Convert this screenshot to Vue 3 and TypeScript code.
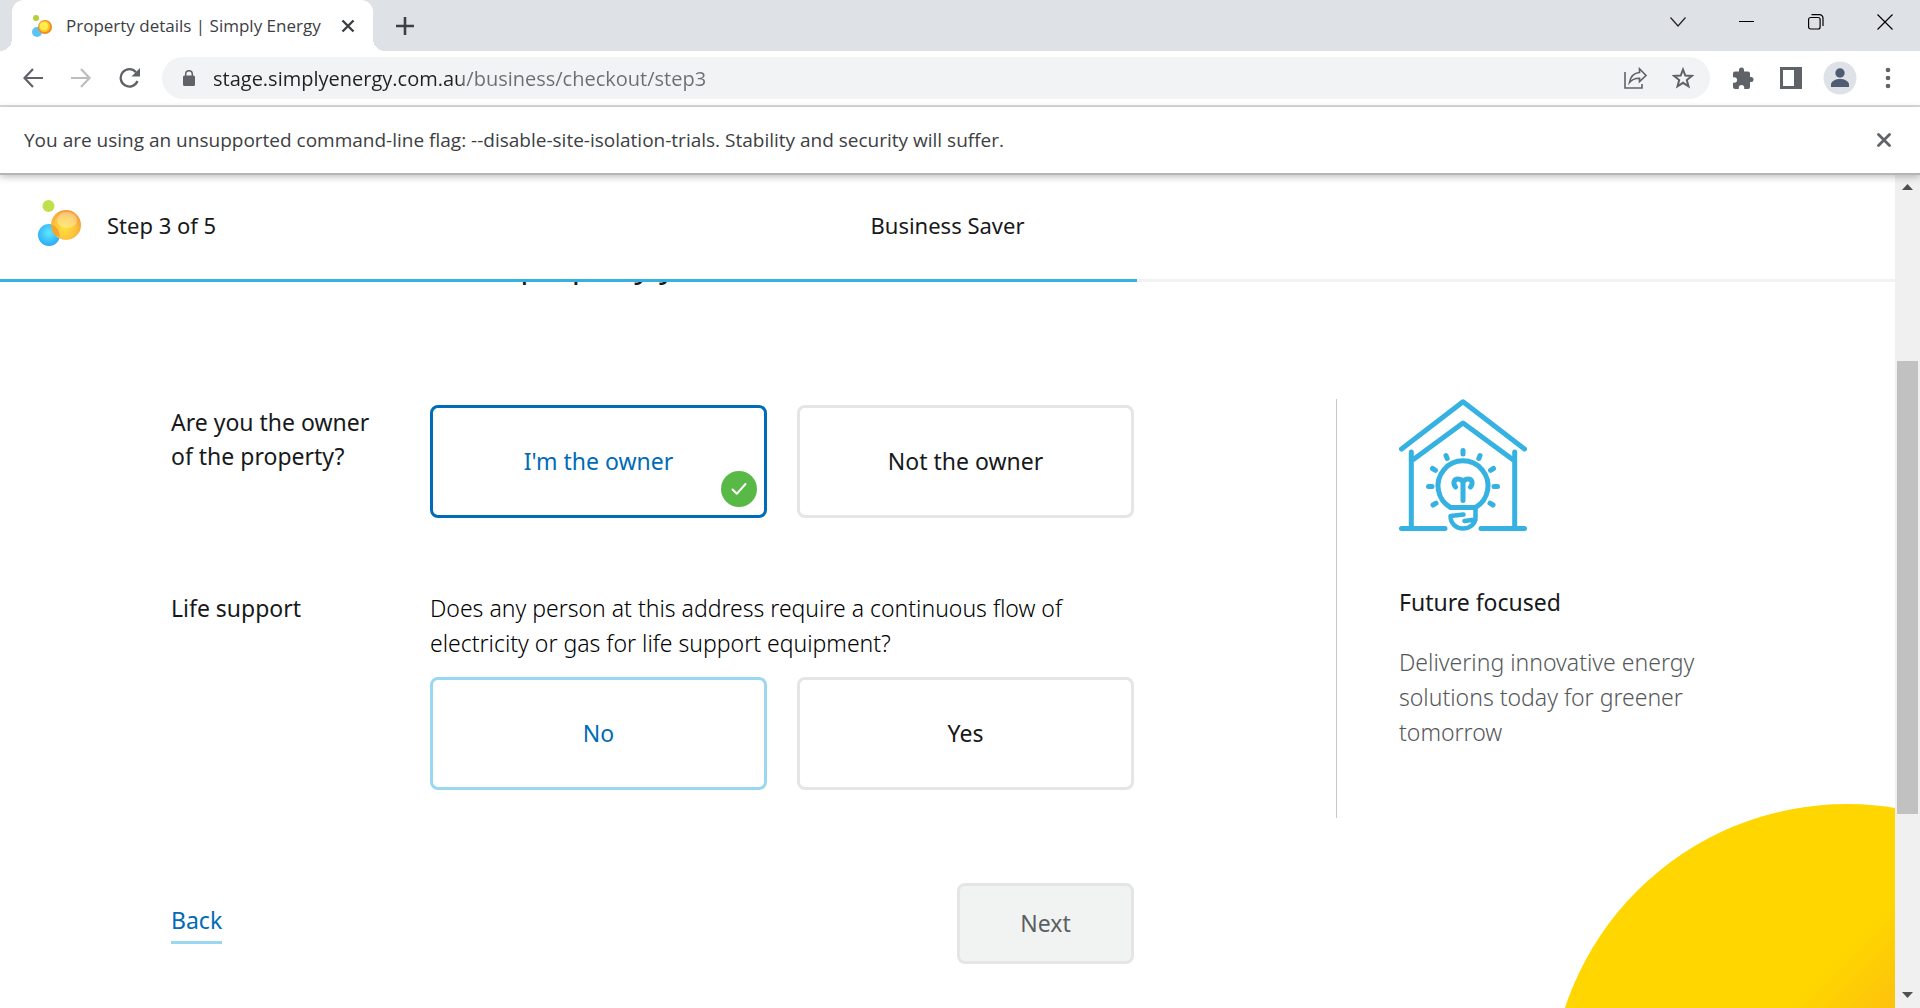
<script setup lang="ts">
import { computed, ref } from 'vue'

interface Choice {
  value: string
  label: string
}

const address = ref('stage.simplyenergy.com.au/business/checkout/step3')

const step = 3
const totalSteps = 5
const progress = computed(() => `${(step / totalSteps) * 100}%`)

const ownerChoices: Choice[] = [
  { value: 'owner', label: "I'm the owner" },
  { value: 'not-owner', label: 'Not the owner' },
]
const lifeSupportChoices: Choice[] = [
  { value: 'no', label: 'No' },
  { value: 'yes', label: 'Yes' },
]

const owner = ref('owner')
const lifeSupport = ref('')
const highlighted = ref('no')
</script>

<template>
  <div class="browser">
    <div class="tab-strip">
      <div class="tab">
        <svg class="favicon" viewBox="0 0 22 24" aria-hidden="true">
          <circle cx="6" cy="18" r="5" fill="#5cc3f3" />
          <circle cx="14" cy="13" r="7" fill="#f28a1f" />
          <circle cx="13.500" cy="12.500" r="5.500" fill="#fdc928" />
          <circle cx="13" cy="12" r="4" fill="#ffee4e" />
          <circle cx="5" cy="4" r="3" fill="#b4cf3a" />
        </svg>
        <span class="tab-title">Property details | Simply Energy</span>
        <button class="icon-button" type="button" aria-label="Close tab">
          <svg width="14" height="14" viewBox="0 0 14 14"><path d="M1.500 1.500l11 11M12.500 1.500l-11 11" stroke="#3c4043" stroke-width="2.400" fill="none" /></svg>
        </button>
      </div>
      <button class="icon-button new-tab" type="button" aria-label="New tab">
        <svg width="18" height="18" viewBox="0 0 18 18"><path d="M9 0v18M0 9h18" stroke="#3c4043" stroke-width="2.600" /></svg>
      </button>
      <div class="window-controls">
        <button class="icon-button" type="button" aria-label="Search tabs">
          <svg width="16" height="16" viewBox="0 0 16 16"><path d="M.5 3.500L8 12l7.500-8.500" stroke="#222" stroke-width="1.200" fill="none" /></svg>
        </button>
        <button class="icon-button" type="button" aria-label="Minimise">
          <svg width="16" height="16" viewBox="0 0 16 16"><path d="M0 7.500h15" stroke="#000" /></svg>
        </button>
        <button class="icon-button" type="button" aria-label="Restore">
          <svg width="16" height="16" viewBox="0 0 16 16"><g fill="none" stroke="#000" stroke-width="1.200"><rect x=".6" y="3.500" width="11.500" height="11.500" rx="2" /><path d="M3.500.6h8a3.500 3.500 0 0 1 3.500 3.500v8" /></g></svg>
        </button>
        <button class="icon-button" type="button" aria-label="Close window">
          <svg width="16" height="16" viewBox="0 0 16 16"><path d="M.5.5l15 15M15.500.5l-15 15" stroke="#000" stroke-width="1.200" /></svg>
        </button>
      </div>
    </div>

    <div class="toolbar">
      <div class="nav-buttons">
        <button class="icon-button" type="button" aria-label="Go back">
          <svg width="20" height="20" viewBox="0 0 20 20"><path d="M20 10H2M10 1L1.500 10l8.500 9" stroke="#5f6368" stroke-width="2.200" fill="none" /></svg>
        </button>
        <button class="icon-button" type="button" aria-label="Go forward">
          <svg width="20" height="20" viewBox="0 0 20 20"><path d="M0 10h18M10 1l8.500 9-8.500 9" stroke="#bbbdbf" stroke-width="2.200" fill="none" /></svg>
        </button>
        <button class="icon-button" type="button" aria-label="Reload">
          <svg width="22" height="20" viewBox="0 0 22 20"><path d="M18.500 13A8.700 8.700 0 1 1 17 4.200" stroke="#5f6368" stroke-width="2.300" fill="none" /><path d="M21 0v8.500h-8.500z" fill="#5f6368" /></svg>
        </button>
      </div>
      <div class="address-bar">
        <svg width="12" height="16" viewBox="0 0 12 16" aria-hidden="true"><rect y="5.500" width="12" height="10.500" rx="1.500" fill="#5f6368" /><path d="M2.700 6V4a3.300 3.300 0 0 1 6.600 0v2" stroke="#5f6368" stroke-width="1.500" fill="none" /></svg>
        <input v-model="address" class="address" type="text" aria-label="Address" />
        <button class="icon-button" type="button" aria-label="Share this page">
          <svg width="24" height="22" viewBox="0 0 24 22"><g fill="none" stroke="#5f6368" stroke-width="1.600"><path d="M1 5v16h17v-4" /><path d="M15.500 1.800L22 8.500l-6.500 6.200v-3.500c-5-.2-7.500 1.200-10 4.300 1-6 4-9.500 10-10z" /></g></svg>
        </button>
        <button class="icon-button" type="button" aria-label="Bookmark this page">
          <svg width="22" height="22" viewBox="0 0 22 22"><path d="M11 2.500l2.300 6 6.500.4-5 4.100 1.700 6.300-5.500-3.500-5.500 3.500L7.200 13l-5-4.100 6.500-.4z" fill="none" stroke="#5f6368" stroke-width="2" /></svg>
        </button>
      </div>
      <div class="tools">
        <button class="icon-button" type="button" aria-label="Extensions">
          <svg width="22" height="22" viewBox="0 0 22 22"><path d="M19 10h-1V6.500a2 2 0 0 0-2-2h-4V3a2.500 2.500 0 0 0-5 0v1.500H3a2 2 0 0 0-2 2v3.800h1.300a2.700 2.700 0 0 1 0 5.400H1V20a2 2 0 0 0 2 2h3.800v-1.400a2.700 2.700 0 0 1 5.400 0V22H16a2 2 0 0 0 2-2v-5h1a2.500 2.500 0 0 0 0-5z" fill="#5f6368" /></svg>
        </button>
        <button class="icon-button" type="button" aria-label="Side panel">
          <svg width="22" height="22" viewBox="0 0 22 22"><path fill-rule="evenodd" d="M0 0h22v22H0zM3 3v16h11V3z" fill="#5f6368" /></svg>
        </button>
        <button class="icon-button" type="button" aria-label="Profile">
          <svg width="34" height="34" viewBox="0 0 34 34"><circle cx="17" cy="17" r="16.500" fill="#dee1e6" /><circle cx="17" cy="12" r="4.700" fill="#4f5b73" /><path d="M8 26v-2.500c0-3.500 5-5.500 9-5.500s9 2 9 5.500V26z" fill="#4f5b73" /></svg>
        </button>
        <button class="icon-button" type="button" aria-label="Menu">
          <svg width="6" height="22" viewBox="0 0 6 22"><g fill="#5f6368"><circle cx="3" cy="3" r="2.300" /><circle cx="3" cy="11" r="2.300" /><circle cx="3" cy="19" r="2.300" /></g></svg>
        </button>
      </div>
    </div>

    <div class="infobar">
      <span>You are using an unsupported command-line flag: --disable-site-isolation-trials. Stability and security will suffer.</span>
      <button class="icon-button" type="button" aria-label="Dismiss">
        <svg width="14" height="14" viewBox="0 0 14 14"><path d="M1.500 1.500l11 11M12.500 1.500l-11 11" stroke="#5f6368" stroke-width="2.800" stroke-linecap="round" /></svg>
      </button>
    </div>

    <div class="viewport">
      <div class="page">
        <header class="page-header">
          <div class="header-row">
            <div class="step">
              <svg class="logo" width="44" height="46" viewBox="0 0 44 46" aria-hidden="true">
                <defs>
                  <radialGradient id="sun" cx=".45" cy=".6" r=".6"><stop offset="0" stop-color="#ffe03c" /><stop offset=".6" stop-color="#fdc63c" /><stop offset="1" stop-color="#f59a3c" /></radialGradient>
                  <radialGradient id="drop" cx=".5" cy=".4" r=".6"><stop offset="0" stop-color="#5fe9ff" /><stop offset="1" stop-color="#2ba9f5" /></radialGradient>
                </defs>
                <circle cx="11" cy="35" r="11" fill="url(#drop)" />
                <circle cx="28" cy="25" r="15" fill="url(#sun)" />
                <ellipse cx="29" cy="20" rx="10" ry="8" fill="#fff" opacity=".3" />
                <path d="M17 35a15 15 0 0 1-3.500-10.500A11 11 0 0 1 21.500 37z" fill="#f28a2c" opacity=".6" />
                <circle cx="10.500" cy="6" r="6" fill="#bfe04a" />
              </svg>
              <span>Step {{ step }} of {{ totalSteps }}</span>
            </div>
            <div class="plan">Business Saver</div>
          </div>
          <div class="track"><div class="track-fill" :style="{ width: progress }"></div></div>
        </header>

        <main class="content">
          <div class="scrolled"><h1>About property you own</h1></div>
          <div class="columns">
            <form class="form" @submit.prevent>
              <div class="question" role="radiogroup" aria-labelledby="owner-label">
                <div id="owner-label" class="question-label">Are you the owner of the property?</div>
                <div class="choices">
                  <label
                    v-for="choice in ownerChoices"
                    :key="choice.value"
                    class="choice"
                    :class="{ selected: owner === choice.value }"
                  >
                    <input v-model="owner" type="radio" name="owner" :value="choice.value" />
                    {{ choice.label }}
                    <span v-if="owner === choice.value" class="badge">
                      <svg width="18" height="16" viewBox="0 0 18 16"><path d="M2.500 8.500l4.300 4.300L15.500 3" fill="none" stroke="#fff" stroke-width="2" stroke-linecap="round" stroke-linejoin="round" /></svg>
                    </span>
                  </label>
                </div>
              </div>

              <div class="question" role="radiogroup" aria-labelledby="life-support-label">
                <div id="life-support-label" class="question-label">Life support</div>
                <div class="question-body">
                  <p class="question-text">Does any person at this address require a continuous flow of electricity or gas for life support equipment?</p>
                  <div class="choices">
                    <label
                      v-for="choice in lifeSupportChoices"
                      :key="choice.value"
                      class="choice"
                      :class="{ highlighted: highlighted === choice.value, selected: lifeSupport === choice.value }"
                      @mouseenter="highlighted = choice.value"
                    >
                      <input v-model="lifeSupport" type="radio" name="life-support" :value="choice.value" />
                      {{ choice.label }}
                    </label>
                  </div>
                </div>
              </div>

              <div class="actions">
                <a class="back" href="#step2">Back</a>
                <button class="next" type="submit" :disabled="!lifeSupport">Next</button>
              </div>
            </form>

            <aside class="promo">
              <svg width="128" height="132" viewBox="0 0 128 132" aria-hidden="true">
                <g fill="none" stroke="#35b1e2" stroke-width="5" stroke-linecap="round" stroke-linejoin="round">
                  <path d="M2.500 50L64 2.800 125.500 50" />
                  <path d="M12.300 62L64 24l51.700 38M12.300 53v76M115.700 53v76" />
                  <path d="M2.500 129.500H46M82 129.500h43.500" />
                  <path d="M51.500 108.500a25 25 0 1 1 25 0z" />
                  <path d="M76.500 108.500v9.500c0 7-5.500 11.500-12.500 11.500s-12.500-5-12.500-12.500l13-1.500M65.500 122l11-1.500" stroke-width="4.500" />
                  <path d="M64 82v19.500M56.500 88c-3-4-1.500-8 2.500-8 3 0 5 1.500 5 4 0-2.500 2-4 5-4 4 0 5.500 4 2.500 8" />
                  <path d="M64 51.500v3.500M47 56.500l1.200 3M81 56.500l-1.200 3M33.500 69.500l3 1.800M94.500 69.500l-3 1.800M29.500 87.500h3.500M98.500 87.500H95M34 106l3-1.800M94 106l-3-1.800" />
                </g>
              </svg>
              <h2>Future focused</h2>
              <p>Delivering innovative energy solutions today for greener tomorrow</p>
            </aside>
          </div>
        </main>
        <div class="sun"></div>
      </div>

      <div class="scrollbar" aria-hidden="true">
        <svg width="11" height="6" viewBox="0 0 11 6"><path d="M0 6l5.500-6L11 6z" fill="#505050" /></svg>
        <div class="scroll-lane"><div class="thumb"></div></div>
        <svg width="11" height="6" viewBox="0 0 11 6"><path d="M0 0l5.500 6L11 0z" fill="#505050" /></svg>
      </div>
    </div>
  </div>
</template>

<style>
body {
  margin: 0;
  overflow: hidden;
}
</style>

<style scoped>
* {
  box-sizing: border-box;
}

.browser {
  display: flex;
  flex-direction: column;
  height: 100vh;
  background: #fff;
  font-family: "Open Sans", "Noto Sans", sans-serif;
  color: #3c4043;
}

svg {
  display: block;
  flex: none;
}

.icon-button {
  display: flex;
  align-items: center;
  justify-content: center;
  flex: none;
  padding: 0;
  border: 0;
  background: none;
}

.tab-strip {
  display: flex;
  flex: none;
  height: 51px;
  padding-left: 12px;
  background: #dee1e6;
}

.tab {
  position: relative;
  display: flex;
  align-items: center;
  width: 361px;
  padding: 0 18px 0 19px;
  border-radius: 12px 12px 0 0;
  background: #fff;
}

.tab::before,
.tab::after {
  content: "";
  position: absolute;
  bottom: 0;
  width: 12px;
  height: 12px;
}

.tab::before {
  right: 100%;
  background: radial-gradient(circle at 0 0, #dee1e6 12px, #fff 12px);
}

.tab::after {
  left: 100%;
  background: radial-gradient(circle at 100% 0, #dee1e6 12px, #fff 12px);
}

.favicon {
  width: 22px;
  height: 24px;
}

.tab-title {
  flex: 1;
  margin-left: 13px;
  font-size: 17px;
  line-height: 24px;
  white-space: nowrap;
}

.new-tab {
  width: 64px;
}

.window-controls {
  display: flex;
  gap: 53px;
  height: 43px;
  margin-left: auto;
  padding-right: 27px;
}

.toolbar {
  display: flex;
  align-items: center;
  flex: none;
  height: 56px;
  padding: 0 29px 0 23px;
  border-bottom: 2px solid #dadbdc;
}

.nav-buttons {
  display: flex;
  gap: 28px;
  width: 139px;
}

.address-bar {
  display: flex;
  align-items: center;
  flex: 1;
  height: 42px;
  padding: 0 16px 0 21px;
  border-radius: 21px;
  background: #f1f3f4;
}

.address {
  flex: 1;
  min-width: 0;
  height: 40px;
  margin: 0 0 0 18px;
  padding: 0;
  border: 0;
  outline: 0;
  background: linear-gradient(90deg, #202124 250px, #6b6e72 250px);
  background-clip: text;
  -webkit-text-fill-color: transparent;
  font-family: inherit;
  font-size: 20px;
}

.address-bar .icon-button + .icon-button {
  margin-left: 24px;
}

.tools {
  display: flex;
  align-items: center;
  gap: 26px;
  margin-left: 22px;
}

.tools .icon-button:nth-child(3) {
  margin: 0 2px 0 -5px;
}

.infobar {
  position: relative;
  z-index: 3;
  display: flex;
  align-items: center;
  justify-content: space-between;
  flex: none;
  height: 68px;
  padding: 0 29px 0 24px;
  border-bottom: 2px solid #b4b5b6;
  background: #fff;
  box-shadow: 0 2px 7px rgba(0, 0, 0, 0.25);
  font-size: 19px;
}

.viewport {
  display: flex;
  flex: 1;
  min-height: 0;
}

.page {
  position: relative;
  flex: 1;
  min-width: 0;
  overflow: hidden;
  color: #17191b;
  font-family: "Noto Sans", "Open Sans", sans-serif;
  font-size: 23px;
  line-height: 35px;
}

.page-header {
  position: relative;
  z-index: 2;
  background: #fff;
}

.header-row {
  display: grid;
  grid-template-columns: 1fr auto 1fr;
  align-items: center;
  height: 104px;
  padding: 0 38px 3px;
  font-size: 22px;
}

.step {
  display: flex;
  align-items: center;
  gap: 25px;
}

.logo {
  margin-bottom: 6px;
}

.track {
  height: 3px;
  background: #f2f2f2;
}

.track-fill {
  height: 3px;
  background: #35b1e2;
}

.scrolled {
  display: flex;
  align-items: flex-end;
  height: 3px;
  margin-left: 421px;
}

h1 {
  margin: 0;
  font-size: 32px;
  font-weight: 400;
  line-height: 40px;
}

.columns {
  display: grid;
  grid-template-columns: minmax(0, 963px) minmax(0, 1fr);
  gap: 202px;
  margin-top: 114px;
  padding: 0 60px 0 171px;
}

.form {
  padding-top: 6px;
}

.question {
  display: grid;
  grid-template-columns: 259px minmax(0, 1fr);
  margin-bottom: 73px;
}

.question-label {
  padding-right: 50px;
  line-height: 34px;
}

.question-text {
  margin: 0 0 16px;
  font-weight: 300;
  color: #000;
}

.choices {
  display: grid;
  grid-template-columns: 1fr 1fr;
  gap: 30px;
}

.choice {
  position: relative;
  display: flex;
  align-items: center;
  justify-content: center;
  height: 113px;
  border: 3px solid #e5e5e5;
  border-radius: 8px;
}

.choice input {
  position: absolute;
  inset: 0;
  width: 100%;
  height: 100%;
  margin: 0;
  opacity: 0;
}

.choice.highlighted {
  border-color: #99d8f0;
  color: #006bb7;
}

.choice.selected {
  border-color: #006bb7;
  color: #006bb7;
}

.badge {
  position: absolute;
  right: 7px;
  bottom: 8px;
  display: flex;
  align-items: center;
  justify-content: center;
  width: 36px;
  height: 36px;
  border-radius: 50%;
  background: #59b947;
}

.actions {
  display: flex;
  justify-content: space-between;
  margin-top: 93px;
}

.back {
  align-self: center;
  padding-bottom: 3px;
  border-bottom: 3px solid #99d8f0;
  color: #006bb7;
  text-decoration: none;
}

.next {
  width: 177px;
  height: 81px;
  border: 3px solid #e5e5e5;
  border-radius: 8px;
  background: #f1f3f3;
  color: #5c5f61;
  font: inherit;
}

.promo {
  align-self: start;
  height: 419px;
  padding-left: 62px;
  border-left: 1px solid #c8c8c8;
}

.promo h2 {
  margin: 54px 0 25px;
  font-size: 23px;
  font-weight: 400;
  line-height: 35px;
}

.promo p {
  max-width: 330px;
  margin: 0;
  font-weight: 300;
  color: #55585a;
}

.sun {
  position: absolute;
  right: -249px;
  top: 629px;
  width: 594px;
  height: 594px;
  border-radius: 50%;
  background: linear-gradient(135deg, #ffd600 37%, #fdc00e 47%, #f58220 80%);
}

.scrollbar {
  display: flex;
  flex-direction: column;
  align-items: center;
  flex: none;
  width: 25px;
  padding: 9px 0 10px;
  background: #f0f0f0;
}

.scroll-lane {
  flex: 1;
  width: 21px;
  padding-top: 171px;
}

.thumb {
  height: 453px;
  background: #c1c1c1;
}
</style>
